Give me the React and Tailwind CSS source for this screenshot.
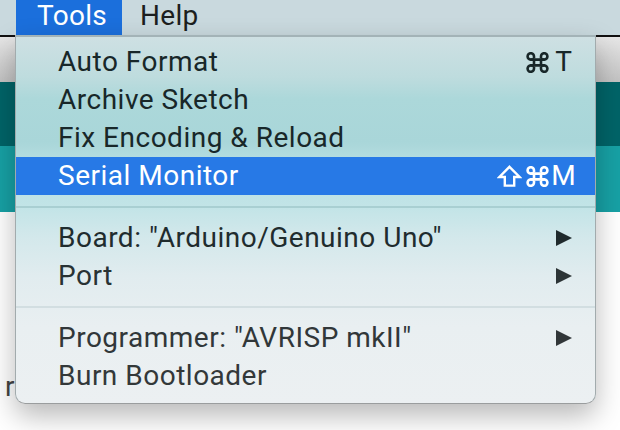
import React from 'react';

const rowText = "text-[28px] leading-[38px] h-[38px] tracking-[0.5px]";

function Arrow({ color }) {
    return (
        <svg width="16" height="16" viewBox="0 0 16 16" className="shrink-0">
            <path d="M0 0 L16 8 L0 16 Z" fill={color} />
        </svg>
    );
}

function CommandKey() {
    return (
        <svg width="23" height="21" viewBox="0 0 23 21" fill="none" stroke="currentColor" strokeWidth="2.6" className="shrink-0">
            <path d="M8 6.5v8M15 6.5v8M4.5 7.6h14M4.5 13.4h14" />
            <path d="M8 6.5V4.5A3.2 3.2 0 1 0 4.7 7.6H8M15 6.5V4.5A3.2 3.2 0 1 1 18.3 7.6H15M8 14.5v2A3.2 3.2 0 1 1 4.7 13.4H8M15 14.5v2A3.2 3.2 0 1 0 18.3 13.4H15" />
        </svg>
    );
}

function ShiftKey() {
    return (
        <svg width="25" height="22" viewBox="0 0 25 22" fill="none" stroke="currentColor" strokeWidth="2.4" strokeLinejoin="miter" className="shrink-0">
            <path d="M12.5 1.8 L22.6 12 H17.2 V20.6 H7.8 V12 H2.4 Z" />
        </svg>
    );
}

function Item({ label, color, shortcut, arrow, active }) {
    return (
        <div
            className={`${rowText} flex items-center justify-between pl-[42px] ${active ? 'bg-[#2779e6] text-white' : ''}`}
            style={active ? undefined : { color }}
        >
            <span className="whitespace-nowrap">{label}</span>
            {shortcut && (
                <span className="flex items-center pr-[19px]">
                    {shortcut.shift && (
                        <span className="mr-[4px] flex items-center"><ShiftKey /></span>
                    )}
                    <CommandKey />
                    <span className="w-[27px] text-center pl-[2px] tracking-normal">{shortcut.key}</span>
                </span>
            )}
            {arrow && (
                <span className="pr-[23px] flex items-center">
                    <Arrow color={arrow} />
                </span>
            )}
        </div>
    );
}

function Separator({ line }) {
    return (
        <div className="h-[24px] flex items-center">
            <div className="h-[2px] w-full" style={{ backgroundColor: line }} />
        </div>
    );
}

export default function App() {
    return (
        <div className="relative w-[620px] h-[430px] overflow-hidden bg-white font-['Roboto',sans-serif]">
            {/* Menu bar */}
            <div className="h-[35px] bg-[#c9d9de] flex text-[28px] leading-[31px] tracking-[0.3px]">
                <div className="ml-[16px] w-[106px] h-full bg-[#1b6fdc] text-white pl-[21px]">Tools</div>
                <div className="ml-[18px] text-[#1c1f20]">Help</div>
            </div>
            <div className="h-[2px] bg-[#111]" />

            {/* Window behind */}
            <div className="h-[45px] bg-linear-to-b from-[#e6e6e6] to-[#c3c3c3]" />
            <div className="h-[64px] bg-[#006468]" />
            <div className="h-[66px] bg-[#17a1a5]" />
            <div className="pt-[159px] pl-[5px] text-[28px] leading-[32px] text-[#444]">r</div>

            {/* Tools dropdown */}
            <div className="absolute left-[15px] top-[35px] w-[581px] h-[369px] border-x border-b border-t-2 border-x-[#a2abad] border-b-[#9a9d9e] border-t-[#a3b3b7] rounded-b-[10px] shadow-[0_12px_28px_rgba(0,0,0,0.28)] bg-[linear-gradient(180deg,#cee0e3_0px,#bedcde_40px,#acd8da_62px,#a9d6d9_105px,#b6dee1_125px,#c2e4e7_170px,#d3e8eb_200px,#e1ecef_240px,#e9eff1_290px,#ecf0f2_368px)] pt-[6px]">
                <Item label="Auto Format" color="#182729" shortcut={{ key: 'T' }} />
                <Item label="Archive Sketch" color="#182729" />
                <Item label="Fix Encoding & Reload" color="#182729" />
                <Item label="Serial Monitor" active shortcut={{ shift: true, key: 'M' }} />
                <Separator line="#a9cfd2" />
                <Item label={'Board: "Arduino/Genuino Uno"'} color="#1f2c2e" arrow="#1f2a2c" />
                <Item label="Port" color="#283234" arrow="#2c3436" />
                <Separator line="#d2dee1" />
                <Item label={'Programmer: "AVRISP mkII"'} color="#313739" arrow="#313638" />
                <Item label="Burn Bootloader" color="#333839" />
            </div>
        </div>
    );
}
